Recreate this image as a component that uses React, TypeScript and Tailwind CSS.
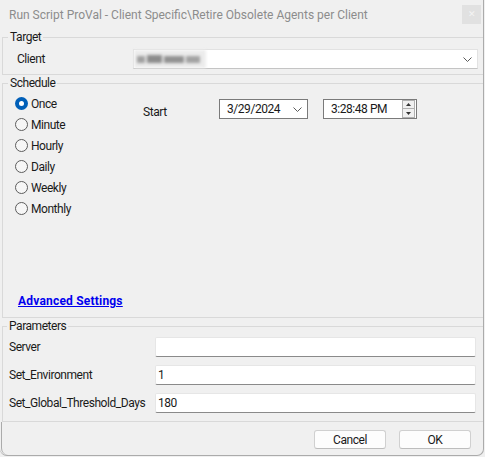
import React from 'react';

interface RadioProps {
  label: string;
  checked?: boolean;
}

const Radio: React.FC<RadioProps> = ({ label, checked = false }) => (
  <div className="flex h-[21px] items-center">
    {checked ? (
      <span className="flex h-[13px] w-[13px] items-center justify-center rounded-full bg-[#005fb8]">
        <span className="h-[5px] w-[5px] rounded-full bg-white" />
      </span>
    ) : (
      <span className="h-[13px] w-[13px] rounded-full border border-[#5c5c5c] bg-[#f6f6f6]" />
    )}
    <span className="ml-[3px]">{label}</span>
  </div>
);

const Chevron: React.FC<{ className?: string }> = ({ className = '' }) => (
  <svg width="9" height="5" viewBox="0 0 9 5" className={className}>
    <path d="M0.5 0.5 L4.5 4.5 L8.5 0.5" fill="none" stroke="#5a5a5a" strokeWidth="1" />
  </svg>
);

const ParamRow: React.FC<{ label: string; value: string }> = ({ label, value }) => (
  <div className="flex h-[20px] items-center">
    <span className="w-[146px] whitespace-nowrap">{label}</span>
    <div className="mr-[7px] flex h-[20px] flex-1 items-center rounded-[2px] border border-[#e6e6e6] border-b-[#8a8a8a] bg-white pl-[2px]">
      {value}
    </div>
  </div>
);

export default function App() {
  const schedules = ['Once', 'Minute', 'Hourly', 'Daily', 'Weekly', 'Monthly'];

  return (
    <div className="h-[457px] w-[485px] bg-[#f0f0f0] font-['Roboto',sans-serif] text-[12px] tracking-[-0.45px] text-[#1a1a1a]">
      <div className="flex h-[456px] w-[484px] flex-col rounded-b-[7px] border-r border-b border-[#ababab]">
        {/* title bar */}
        <div className="flex h-[29px] items-center justify-between pl-[9px] pr-[2px]">
          <span className="tracking-normal text-[#8c8c8c]">
            Run Script ProVal - Client Specific\Retire Obsolete Agents per Client
          </span>
          <div className="flex h-[19px] w-[19px] items-center justify-center bg-[#e1e1e1] text-[9px] leading-none text-[#f4f4f4]">
            ✕
          </div>
        </div>

        {/* target */}
        <fieldset className="ml-[2px] border-t border-b border-l border-[#d9d9d9]">
          <legend className="ml-[5px] px-[2px] leading-[16px]">Target</legend>
          <div className="flex items-center pt-[4px] pb-[5px] pl-[14px]">
            <span className="w-[116px]">Client</span>
            <div className="mr-[5px] flex h-[20px] flex-1 items-center border border-[#e2e2e2] border-b-[#c4c4c4] bg-white">
              <div className="flex h-full w-[72px] items-center gap-[2px] bg-[#ececec] pl-[3px] blur-[1.5px]">
                <span className="h-[7px] w-[8px] bg-[#a0a0a0]" />
                <span className="h-[8px] w-[15px] bg-[#8c8c8c]" />
                <span className="h-[7px] w-[20px] bg-[#929292]" />
                <span className="h-[7px] w-[14px] bg-[#a2a2a2]" />
              </div>
              <div className="flex-1" />
              <Chevron className="mr-[5px]" />
            </div>
          </div>
        </fieldset>

        {/* schedule */}
        <fieldset className="ml-[2px] border-b border-l border-t border-[#d9d9d9]">
          <legend className="ml-[5px] px-[2px] leading-[16px]">Schedule</legend>
          <div className="flex h-[226px] flex-col">
            <div className="flex">
              <div className="w-[140px] pt-[2px] pl-[12px]">
                {schedules.map((s, i) => (
                  <Radio key={s} label={s} checked={i === 0} />
                ))}
              </div>
              <div className="flex items-start pt-[8px]">
                <span className="mt-[4px] w-[76px]">Start</span>
                <div className="flex h-[20px] w-[89px] items-center justify-between border border-[#7a7a7a] bg-white pl-[7px] pr-[5px]">
                  <span>3/29/2024</span>
                  <Chevron />
                </div>
                <div className="ml-[15px] flex h-[20px] w-[94px] items-center justify-between border border-[#7a7a7a] bg-white pl-[7px] pr-[1px]">
                  <span>3:28:48 PM</span>
                  <div className="flex h-[18px] w-[13px] flex-col">
                    <div className="flex h-[9px] items-center justify-center border border-[#b0b0b0] bg-[#f0f0f0]">
                      <svg width="5" height="3" viewBox="0 0 5 3">
                        <path d="M0 3 L2.5 0 L5 3 Z" fill="#333" />
                      </svg>
                    </div>
                    <div className="flex h-[9px] items-center justify-center border border-t-0 border-[#b0b0b0] bg-[#f0f0f0]">
                      <svg width="5" height="3" viewBox="0 0 5 3">
                        <path d="M0 0 L2.5 3 L5 0 Z" fill="#333" />
                      </svg>
                    </div>
                  </div>
                </div>
              </div>
            </div>
            <div className="flex-1" />
            <a className="mb-[8px] ml-[15px] font-bold leading-[16px] tracking-[0.2px] text-[#0000ee] underline">
              Advanced Settings
            </a>
          </div>
        </fieldset>

        {/* parameters */}
        <fieldset className="ml-[2px] mt-[1px] border-b border-l border-t border-[#d9d9d9]">
          <legend className="ml-[4px] px-[2px] leading-[14px]">Parameters</legend>
          <div className="flex flex-col gap-[8px] pt-[4px] pb-[8px] pl-[6px]">
            <ParamRow label="Server" value="" />
            <ParamRow label="Set_Environment" value="1" />
            <ParamRow label="Set_Global_Threshold_Days" value="180" />
          </div>
        </fieldset>

        {/* buttons */}
        <div className="ml-[1px] flex flex-1 items-start justify-end gap-[13px] rounded-bl-[7px] border-l border-[#ababab] pt-[8px] pr-[12px]">
          <button className="h-[19px] w-[72px] rounded-[3px] border border-[#d0d0d0] border-b-[#bdbdbd] bg-[#fdfdfd] leading-none">
            Cancel
          </button>
          <button className="h-[19px] w-[72px] rounded-[3px] border border-[#d0d0d0] border-b-[#bdbdbd] bg-[#fdfdfd] leading-none">
            OK
          </button>
        </div>
      </div>
    </div>
  );
}
